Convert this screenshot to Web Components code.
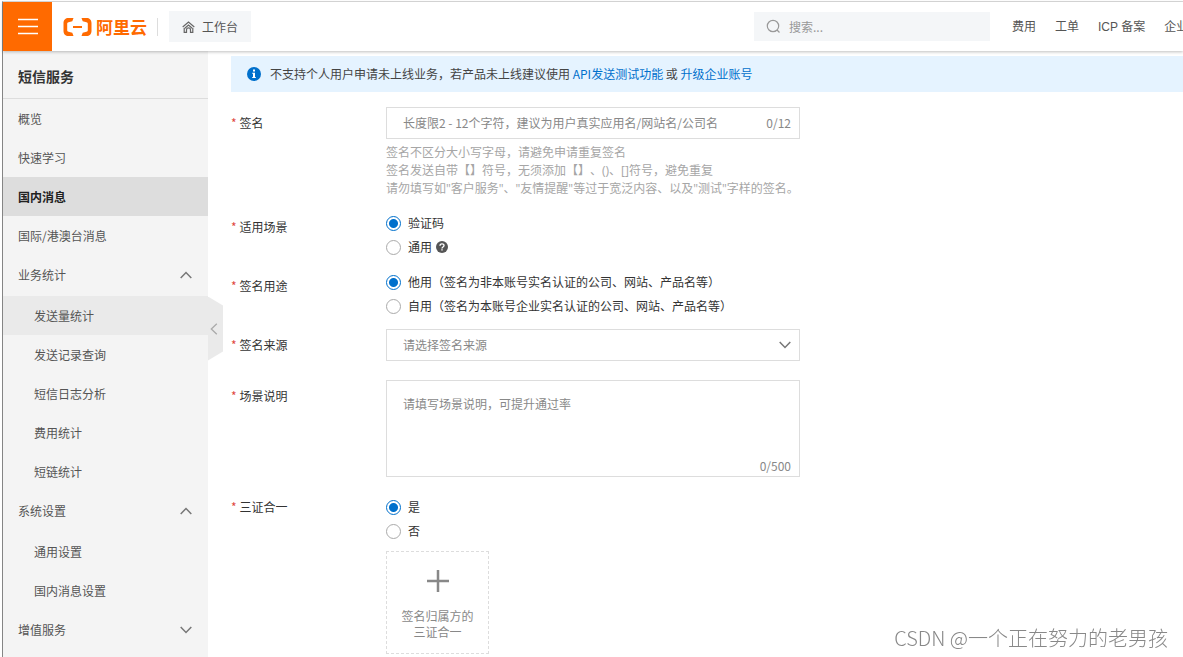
<!DOCTYPE html>
<html lang="zh-CN">
<head>
<meta charset="utf-8">
<meta name="viewport" content="width=device-width, initial-scale=1">
<title>短信服务</title>
<style>
  html, body { height: 100%; }
  body {
    margin: 0; overflow: hidden; background: #fff; color: #333;
    font: 12px/18px "Noto Sans CJK SC", sans-serif;
    text-spacing-trim: space-all;
    text-autospace: no-autospace;
  }
</style>
</head>
<body>
<sms-console>
  <top-bar slot="top"></top-bar>
  <side-nav slot="side" heading="短信服务"></side-nav>
  <notice-bar>不支持个人用户申请未上线业务，若产品未上线建议使用<notice-link>API发送测试功能</notice-link> 或 <notice-link>升级企业账号</notice-link></notice-bar>
  <form-stack>
    <text-field label="签名" hint="长度限2 - 12个字符，建议为用户真实应用名/网站名/公司名" count="0/12">
      <div>签名不区分大小写字母，请避免申请重复签名</div>
      <div>签名发送自带【】符号，无须添加【】、()、[]符号，避免重复</div>
      <div>请勿填写如"客户服务"、"友情提醒"等过于宽泛内容、以及"测试"字样的签名。</div>
    </text-field>
    <radio-field label="适用场景" options="验证码|通用" help="1"></radio-field>
    <radio-field label="签名用途" options="他用（签名为非本账号实名认证的公司、网站、产品名等）|自用（签名为本账号企业实名认证的公司、网站、产品名等）"></radio-field>
    <select-field label="签名来源" hint="请选择签名来源"></select-field>
    <area-field label="场景说明" hint="请填写场景说明，可提升通过率" count="0/500"></area-field>
    <radio-field compact label="三证合一" options="是|否"><upload-tile>签名归属方的<br>三证合一</upload-tile></radio-field>
  </form-stack>
  <page-credit slot="credit">CSDN @一个正在努力的老男孩</page-credit>
</sms-console>

<script>
const base = '*{box-sizing:border-box}button,input,select,textarea{font:inherit;color:inherit}';

function define(name, render) {
  customElements.define(name, class extends HTMLElement {
    constructor() {
      super();
      this.attachShadow({ mode: 'open' });
    }
    connectedCallback() {
      this.shadowRoot.innerHTML = render(this);
    }
  });
}

define('sms-console', () => `
<style>${base}
  :host { display: flex; flex-direction: column; height: 100vh; padding: 1px 0 0 2px; overflow: hidden; }
  .frame { flex: 1; min-height: 0; display: flex; flex-direction: column; border-left: 1px solid #858585; border-top: 1px solid #dcdcdc; }
  .body { flex: 1; min-height: 0; display: flex; }
  main { flex: 1; min-width: 0; padding: 5px 0 0 23px; }
</style>
<div class="frame">
  <slot name="top"></slot>
  <div class="body"><slot name="side"></slot><main><slot></slot></main></div>
</div>
<slot name="credit"></slot>`);

define('top-bar', () => `
<style>${base}
  :host { display: block; position: relative; z-index: 2; background: #fff; box-shadow: 0 1px 3px rgba(0,0,0,.25); color: #555; }
  header { display: flex; align-items: center; height: 49px; overflow: hidden; }
  button { border: 0; padding: 0; }
  .menu { width: 49px; height: 49px; background: #ff6a00; display: grid; place-items: center; }
  .logo { display: flex; align-items: center; gap: 4px; margin-left: 11px; color: #ff6a00; text-decoration: none; font: bold 17px/24px "Noto Sans CJK SC", sans-serif; }
  .rule { width: 1px; height: 18px; background: #ddd; margin: 0 11px 0 10px; }
  .desk { display: flex; align-items: center; gap: 7px; height: 31px; padding: 0 13px; background: #f4f6f8; }
  .search { flex: 0 1 236px; height: 29px; margin-left: auto; padding: 0 12px; background: #f4f6f8; display: flex; align-items: center; gap: 8px; }
  input { flex: 1; min-width: 0; border: 0; padding: 0; background: none; outline: 0; }
  input::placeholder { color: #999; opacity: 1; }
  nav { flex: 0 0 193px; display: flex; gap: 19px; padding-left: 22px; overflow: hidden; white-space: nowrap; font-family: "Liberation Sans", "Noto Sans CJK SC", sans-serif; }
  nav a { color: #555; text-decoration: none; }
</style>
<header>
  <button class="menu" aria-label="菜单"><svg width="20" height="17" stroke="#fff" stroke-width="1.6"><path d="M0 1.5h20M0 8.5h20M0 15.5h20"/></svg></button>
  <a class="logo" href="#"><svg width="29" height="18" viewBox="0 0 29 18" fill="#ff6a00"><path d="M10.500 0H5.500C2.500 0 .500 2 .500 5v8c0 3 2 5 5 5h5l-1.200-3.300-3.800-.9c-.8-.2-1.300-.8-1.300-1.500V5.700c0-.7.5-1.300 1.300-1.500l3.800-.9zM18.500 0h5c3 0 5 2 5 5v8c0 3-2 5-5 5h-5l1.200-3.300 3.800-.9c.8-.2 1.300-.8 1.300-1.500V5.700c0-.7-.5-1.300-1.300-1.500l-3.800-.9zM10 8h9v2h-9z"/></svg>阿里云</a>
  <span class="rule"></span>
  <button class="desk"><svg width="13" height="12" viewBox="0 0 13 12" fill="none" stroke="#666" stroke-width="1.200"><path d="M.7 6 6.500 1l5.800 5M2.200 7v4.300h2.300V8.800a2 2 0 0 1 4 0v2.500h2.300V7M2.800 7.200 6.500 4l3.700 3.200"/></svg>工作台</button>
  <label class="search"><svg width="15" height="15" viewBox="0 0 15 15" fill="none" stroke="#999" stroke-width="1.200"><circle cx="7" cy="7" r="5.700"/><path d="m11 11 2.500 2.500"/></svg><input type="text" placeholder="搜索..." aria-label="搜索"></label>
  <nav><a href="#">费用</a><a href="#">工单</a><a href="#">ICP 备案</a><a href="#">企业</a></nav>
</header>`);

const menu = [
  { t: '概览' }, { t: '快速学习' }, { t: '国内消息', c: 'current' }, { t: '国际/港澳台消息' },
  { t: '业务统计', kids: ['发送量统计', '发送记录查询', '短信日志分析', '费用统计', '短链统计'] },
  { t: '系统设置', kids: ['通用设置', '国内消息设置'] },
  { t: '增值服务', closed: true }
];
const chevron = up => `<svg width="12" height="8" viewBox="0 0 12 8" fill="none" stroke="#777" stroke-width="1.500"><path d="${up ? 'M.7 7 6 1.500 11.300 7' : 'M.7 1 6 6.500 11.300 1'}"/></svg>`;

define('side-nav', el => `
<style>${base}
  :host { display: block; position: relative; z-index: 1; flex: 0 0 205px; background: #f4f4f4; color: #555; }
  h1 { margin: 0; height: 48px; padding: 2px 15px 0; border-bottom: 1px solid #ddd; font: bold 14px/46px "Noto Sans CJK SC", sans-serif; color: #333; }
  ul { list-style: none; margin: 0; padding: 0; }
  ul ul { padding-top: 2px; }
  .item { display: flex; align-items: center; justify-content: space-between; width: 100%; height: 39px; padding: 0 16px 0 15px; border: 0; background: none; color: inherit; text-decoration: none; }
  ul ul .item { padding-left: 31px; }
  .current { background: #ddd; color: #222; font-weight: bold; }
  .hover { background: #eaeaea; }
  .fold { position: fixed; left: 208px; top: 50%; transform: translateY(-50%); width: 15px; height: 64px; border: 0; padding: 0 3px 0 0; background: #eaeaea; clip-path: polygon(0 0, 100% 14%, 100% 86%, 0 100%); display: grid; place-items: center; }
</style>
<h1>${el.getAttribute('heading')}</h1>
<nav><ul>${menu.map(m => `<li>${m.kids || m.closed
  ? `<button class="item">${m.t}${chevron(!m.closed)}</button>`
  : `<a class="item ${m.c || ''}" href="#">${m.t}</a>`}${m.kids
  ? `<ul>${m.kids.map(k => `<li><a class="item ${k === '发送量统计' ? 'hover' : ''}" href="#">${k}</a></li>`).join('')}</ul>` : ''}</li>`).join('')}</ul></nav>
<button class="fold" aria-label="收起"><svg width="8" height="12" viewBox="0 0 8 12" fill="none" stroke="#aaa" stroke-width="1.300"><path d="M6.800.7 1.300 6l5.500 5.300"/></svg></button>`);

define('notice-bar', () => `
<style>${base}
  :host { display: flex; align-items: center; gap: 9px; height: 36px; padding: 0 16px; background: #e5f3ff; color: #444; white-space: nowrap; }
  svg { flex: none; }
</style>
<svg width="14" height="14" viewBox="0 0 14 14"><circle cx="7" cy="7" r="7" fill="#0070cc"/><path fill="#fff" d="M6 2.500h2v2H6zM5.200 5.700H8v4.200h.8V11H5.200V9.900H6V6.800h-.8z"/></svg>
<div><slot></slot></div>`);

define('notice-link', () => `
<style>:host { display: inline; } a { color: #0070cc; text-decoration: none; }</style><a href="#"><slot></slot></a>`);

define('form-stack', () => `
<style>:host { display: flex; flex-direction: column; gap: 11px; padding-top: 15px; }</style><slot></slot>`);

const field = base + `
  :host { display: grid; grid-template-columns: 155px minmax(0, 414px); align-items: start; }
  .name { line-height: 32px; color: #333; }
  .name::before { content: "*"; color: #e0483e; margin-right: 3px; }
  .box { border: 1px solid #ddd; background: #fff; display: flex; }
  .count { color: #888; }
  input::placeholder, textarea::placeholder { color: #888; opacity: 1; }`;

define('text-field', el => `
<style>${field}
  .box { height: 32px; align-items: center; padding: 0 8px 0 16px; }
  input { flex: 1; min-width: 0; border: 0; padding: 0; outline: 0; background: none; }
  .tips { color: #a6a6a6; padding: 5px 0 2px; white-space: nowrap; font-family: "Open Sans", "Noto Sans CJK SC", sans-serif; }
</style>
<label class="name" for="f">${el.getAttribute('label')}</label>
<div><div class="box"><input id="f" type="text" placeholder="${el.getAttribute('hint')}"><span class="count">${el.getAttribute('count')}</span></div>
<div class="tips"><slot></slot></div></div>`);

define('radio-field', el => `
<style>${field}
  :host([compact]) .name { line-height: 24px; }
  .opt { display: flex; align-items: center; height: 24px; white-space: nowrap; }
  label { display: flex; align-items: center; gap: 7px; }
  input { appearance: none; margin: 0; width: 15px; height: 15px; border: 1px solid #aaa; border-radius: 50%; background: #fff; }
  input:checked { border-color: #0070cc; background: radial-gradient(circle, #0070cc 4px, #fff 5px); }
  svg { margin-left: 4px; }
</style>
<div class="name" id="n">${el.getAttribute('label')}</div>
<div><div role="radiogroup" aria-labelledby="n">${el.getAttribute('options').split('|').map((o, i) => `
<div class="opt"><label><input type="radio" name="r" ${i ? '' : 'checked'}>${o}</label>${el.getAttribute('help') === String(i)
  ? '<svg width="12" height="12" viewBox="0 0 12 12"><circle cx="6" cy="6" r="6" fill="#555"/><path d="M4 4.800C4 2.300 8 2.300 8 4.600 8 6 6 6 6 7.400M6 8.300v1.300" fill="none" stroke="#fff" stroke-width="1.400"/></svg>' : ''}</div>`).join('')}</div><slot></slot></div>`);

define('select-field', el => `
<style>${field}
  :host { padding-bottom: 8px; }
  .box { height: 32px; display: grid; align-items: center; }
  select { grid-area: 1/1; width: 100%; height: 30px; appearance: none; border: 0; outline: 0; padding: 0 32px 0 16px; background: none; color: #888; }
  svg { grid-area: 1/1; justify-self: end; margin-right: 8px; pointer-events: none; }
</style>
<label class="name" for="f">${el.getAttribute('label')}</label>
<div class="box"><select id="f"><option>${el.getAttribute('hint')}</option></select>${chevron(false)}</div>`);

define('area-field', el => `
<style>${field}
  :host { padding-bottom: 7px; }
  .box { height: 97px; flex-direction: column; padding: 14px 8px 1px 16px; }
  textarea { flex: 1; min-height: 0; border: 0; padding: 0; outline: 0; resize: none; background: none; overflow: hidden; }
  .count { align-self: flex-end; }
</style>
<label class="name" for="f">${el.getAttribute('label')}</label>
<div class="box"><textarea id="f" placeholder="${el.getAttribute('hint')}"></textarea><span class="count">${el.getAttribute('count')}</span></div>`);

define('upload-tile', () => `
<style>${base}
  :host { display: block; margin-top: 8px; }
  button { display: flex; flex-direction: column; align-items: center; gap: 16px; width: 103px; height: 103px; padding: 18px 0 0; border: 1px dashed #ddd; background: #fff; color: #888; line-height: 16px; }
</style>
<button><svg width="22" height="22" stroke="#888" stroke-width="2.500"><path d="M0 11h22M11 0v22"/></svg><span><slot></slot></span></button>`);

define('page-credit', () => `
<style>
  :host { display: block; position: fixed; right: 15px; bottom: 6px; z-index: 3; color: #888; font: 300 20px/26px "Noto Sans CJK SC", sans-serif; white-space: nowrap; }
</style><slot></slot>`);
</script>
</body>
</html>
